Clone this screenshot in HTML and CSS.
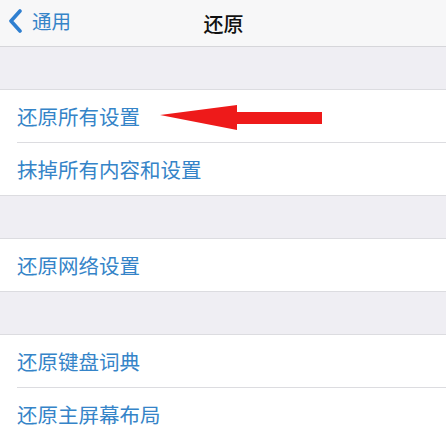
FILE: index.html
```html
<!DOCTYPE html>
<html lang="zh-CN">
<head>
    <meta charset="UTF-8">
    <meta name="viewport" content="width=device-width, initial-scale=1.0">
    <title>还原</title>
    <link rel="stylesheet" href="styles.css">
</head>
<body>
    <div class="navbar">
        <a class="navbar__back" href="#">
            <svg class="chevron" width="15" height="24" viewBox="0 0 15 24">
                <path d="M12 2 L3 12 L12 22" fill="none" stroke="#2f7fd0" stroke-width="3.6" stroke-linecap="round" stroke-linejoin="round"/>
            </svg>
            <span>通用</span>
        </a>
        <div class="navbar__title">还原</div>
    </div>

    <div class="gap"></div>
    <div class="group">
        <div class="cell">
            <span>还原所有设置</span>
            <svg class="arrow" width="164" height="26" viewBox="0 0 164 26">
                <polygon points="0,10 77,0 77,7 162,7 162,19 77,19 77,25" fill="#ee1a1a"/>
            </svg>
        </div>
        <div class="cell">抹掉所有内容和设置</div>
    </div>

    <div class="gap"></div>
    <div class="group">
        <div class="cell">还原网络设置</div>
    </div>

    <div class="gap"></div>
    <div class="group">
        <div class="cell">还原键盘词典</div>
        <div class="cell">还原主屏幕布局</div>
    </div>
</body>
</html>
```

FILE: styles.css
```css
body {
    margin: 0;
    background-color: #efeef3;
    font-family: "Noto Sans CJK SC", "Noto Sans", sans-serif;
    overflow: hidden;
}

.navbar {
    height: 46px;
    display: flex;
    align-items: center;
    justify-content: center;
    position: relative;
    background: #f7f7f8;
    border-bottom: 1px solid #d6d6da;
}

.navbar__back {
    position: absolute;
    left: 8px;
    top: 9px;
    display: flex;
    align-items: center;
    gap: 9px;
    text-decoration: none;
    color: #3584c8;
    font-size: 19.5px;
    line-height: 24px;
}

.navbar__title {
    font-size: 20px;
    color: #111;
    font-weight: 500;
    margin-left: 1px;
}

.gap {
    height: 42px;
}

.group {
    background: #fff;
    border-top: 1px solid #dcdce0;
    border-bottom: 1px solid #dcdce0;
}

.cell {
    height: 52px;
    margin-left: 17px;
    display: flex;
    align-items: center;
    position: relative;
    color: #3584c8;
    font-size: 20.5px;
}

.cell + .cell {
    border-top: 1px solid #dcdce0;
}

.arrow {
    position: absolute;
    left: 143px;
    top: 15px;
}
```
